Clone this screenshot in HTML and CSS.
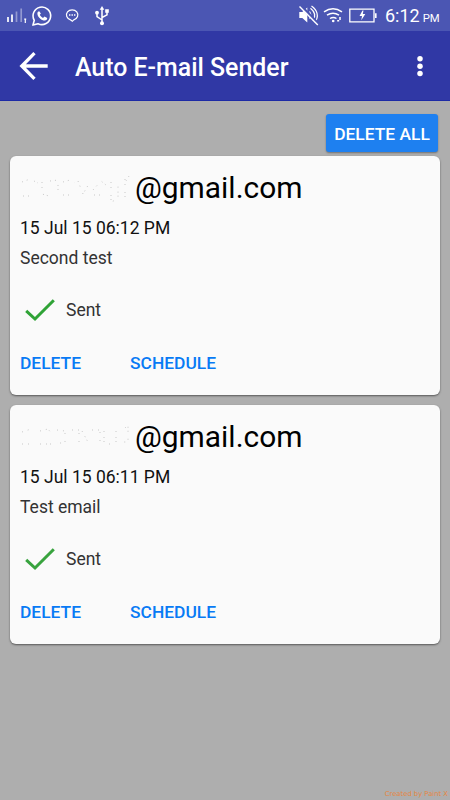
FILE: index.html
```html
<!DOCTYPE html>
<html lang="en">
<head>
<meta charset="utf-8">
<title>Auto E-mail Sender</title>
<link rel="stylesheet" href="styles.css">
</head>
<body>
<header class="status">
  <svg class="status-left" width="120" height="31" viewBox="0 0 120 31" fill="none" stroke="#fff">
    <path d="M8 17v5M12 14.5V22" stroke-width="1.7"/>
    <path d="M16.5 11.5V22M21.2 8.5V22" stroke-width="1.7" opacity=".4"/>
    <path d="M24.2 19.2h2M25.3 19v4" stroke-width="1.2"/>
    <path d="M34.3 20.3A8.8 8.8 0 1 1 38 23.7L32.9 25.1z" stroke-width="1.6" stroke-linejoin="round"/>
    <path d="M39.2 11.2c-1 .1-2 1.1-1.8 2.7.4 3.3 4.2 6.6 7.4 6.6 1.5 0 2.5-1 2.4-2.4l-2.7-1.5-1.5 1.3c-1.5-.6-2.6-1.7-3.2-3.1l1.1-1.3z" fill="#fff" stroke="none"/>
    <path d="M70.5 19.8a5.7 5.1 0 1 1 3.3 0L72.3 21.3z" stroke-width="1.2"/>
    <path d="M69 15h1.4M71.5 15h1.4M74 15h1.4" stroke-width="1.3"/>
    <path d="M102 23V8M102 20l-5-3.4V13M102 17.5l5-2.7V11" stroke-width="1.5"/>
    <path d="M99.7 9.8 102 6l2.3 3.8zM105.2 9.2h3.6v3.6h-3.6z" fill="#fff" stroke="none"/>
    <circle cx="97" cy="12.7" r="1.9" fill="#fff" stroke="none"/>
    <circle cx="102" cy="23.2" r="2" fill="#fff" stroke="none"/>
  </svg>
  <svg class="status-right" width="80" height="31" viewBox="298 0 80 31" fill="none" stroke="#fff">
    <path d="M299.3 12h3l5-4.5v15l-5-4.5h-3z" fill="#fff" stroke="none"/>
    <path d="M309.5 11.5q2.5 3.5 0 7M310.5 8.3q7 5.5 2.5 12.5M311.5 6q9.5 7 3.5 16.5" stroke-width="1.2"/>
    <path d="M300.5 5.5 318.8 24.5" stroke="#4b56b3" stroke-width="3.2"/>
    <path d="M299.5 6.5 317.8 25" stroke-width="1.4"/>
    <path d="M324 11.8q9-6.2 18 0M327 15.2q6-4 12 0M330 18.5q3.3-2.2 6.5 0" stroke-width="1.5"/>
    <circle cx="333.2" cy="21" r="1.3" fill="#fff" stroke="none"/>
    <path d="M337.2 20.8h2M340 17v3" stroke-width="1.5"/>
    <path d="M349.8 9.2H374v12.6h-24.2z" stroke-width="1.3"/>
    <path d="M375.8 13.3v4.8" stroke-width="1.6"/>
    <path d="M362.5 10.5 359.5 16h2.5l-.7 4.3 4-6.3h-2.5l.7-3.5z" fill="#fff" stroke="none"/>
  </svg>
  <span class="clock">6:12<small>PM</small></span>
</header>
<nav class="bar">
  <svg class="back" width="30" height="30" viewBox="0 0 30 30" fill="none" stroke="#fff" stroke-width="3.3"><path d="M28.7 15H3.5M15.5 2.2 2.8 15l12.7 12.8"/></svg>
  <h1>Auto E-mail Sender</h1>
  <svg class="more" width="6" height="22" viewBox="0 0 6 22" fill="#fff"><circle cx="3" cy="3.8" r="2.75"/><circle cx="3" cy="11.2" r="2.75"/><circle cx="3" cy="18.6" r="2.75"/></svg>
</nav>
<main>
  <button class="delete-all">DELETE ALL</button>
  <article class="card">
    <div class="email">
      <svg class="erased" width="115" height="40" viewBox="0 0 115 40" fill="none" stroke="#c8c8c8" stroke-width="1"><path stroke-dasharray="1 4 1 7 1 3" d="M2 14l8-3 8 4M3 28h12M22 14v12l7 2M30 13l8-1v14M43 14l7-2 5 3M43 27h10M58 13l5 13 7-12M73 22l8-9 5 4M74 27h10M91 14v20l7-3V15M105 11v18M109 8l-3 5"/></svg>
      <span>@gmail.com</span>
    </div>
    <div class="date">15 Jul 15 06:12 PM</div>
    <div class="subject">Second test</div>
    <div class="state"><svg width="30" height="24" viewBox="0 0 30 24" fill="none" stroke="#2fa336" stroke-width="3"><path d="M1.2 12.8 10 21 28.8 2.2"/></svg><span>Sent</span></div>
    <div class="actions"><a class="delete">DELETE</a><a>SCHEDULE</a></div>
  </article>
  <article class="card">
    <div class="email">
      <svg class="erased" width="115" height="40" viewBox="0 0 115 40" fill="none" stroke="#c8c8c8" stroke-width="1"><path stroke-dasharray="1 5 1 3 1 7" d="M2 15l9-3M2 27h10M20 14l8-2 4 5M20 27h11M37 13l8 1v12h-8M52 13h7v12M62 14l7 13M72 13h8v14M84 14v13h8M96 14v17M105 11l3-3v17h-6"/></svg>
      <span>@gmail.com</span>
    </div>
    <div class="date">15 Jul 15 06:11 PM</div>
    <div class="subject">Test email</div>
    <div class="state"><svg width="30" height="24" viewBox="0 0 30 24" fill="none" stroke="#38a33e" stroke-width="3"><path d="M1.2 12.8 10 21 28.8 2.2"/></svg><span>Sent</span></div>
    <div class="actions"><a class="delete">DELETE</a><a>SCHEDULE</a></div>
  </article>
</main>
<footer>Created by Paint X</footer>
</body>
</html>
```
FILE: styles.css
```css
* { box-sizing: border-box; }
body {
  margin: 0;
  height: 800px;
  display: flex;
  flex-direction: column;
  background: #aeaeae;
  font-family: Roboto, "Liberation Sans", sans-serif;
  overflow: hidden;
}
svg { display: block; flex: none; }
.status {
  height: 31px;
  flex: none;
  display: flex;
  align-items: center;
  background: #4b56b3;
  color: #fff;
}
.status-right { margin-left: 178px; }
.clock {
  margin-left: 7px;
  margin-top: 3px;
  font-size: 18px;
  line-height: 31px;
  white-space: nowrap;
}
.clock small { font-size: 11.3px; margin-left: 3px; }
.bar {
  height: 70px;
  flex: none;
  display: flex;
  align-items: center;
  padding: 2px 27px 0 19px;
  background: #3038a5;
  border-bottom: 1px solid #1d2aa5;
  color: #fff;
}
.bar h1 {
  margin: 2px 0 0 26px;
  font-size: 24.9px;
  line-height: 40px;
  font-weight: 500;
  white-space: nowrap;
}
.back { margin-top: -1px; }
.more { margin: -1px 0 0 auto; }
main {
  flex: 1;
  display: flex;
  flex-direction: column;
  padding: 13px 10px 0;
}
.delete-all {
  align-self: flex-end;
  width: 112px;
  height: 38px;
  margin: 0 2px 4px 0;
  padding: 2px 0 0;
  border: 0;
  border-radius: 3px;
  background: #1e80f0;
  box-shadow: 0 1px 2px rgba(0, 0, 0, .35);
  color: #fff;
  font: 500 17.4px Roboto, sans-serif;
  white-space: nowrap;
}
.card {
  height: 239px;
  margin-bottom: 10px;
  padding: 12px 10px 0;
  border-radius: 6px;
  background: #fafafa;
  box-shadow: 0 1px 2px rgba(0, 0, 0, .5);
  color: #111;
  font-size: 17.5px;
  line-height: 30px;
  white-space: nowrap;
}
.email {
  display: flex;
  height: 40px;
  margin-bottom: 5px;
  font-size: 29.9px;
  line-height: 40px;
  color: #000;
}
.subject { color: #333; }
.state {
  display: flex;
  align-items: center;
  gap: 11px;
  height: 30px;
  margin-top: 22px;
  padding-left: 5px;
  color: #333;
}
.actions {
  display: flex;
  margin-top: 23px;
  color: #087af5;
  font-size: 17.4px;
  font-weight: 500;
}
.delete { width: 110px; }
footer {
  height: 12px;
  padding-right: 2px;
  text-align: right;
  font: 6.8px/12px "DejaVu Sans", sans-serif;
  color: #e5863f;
}
```
